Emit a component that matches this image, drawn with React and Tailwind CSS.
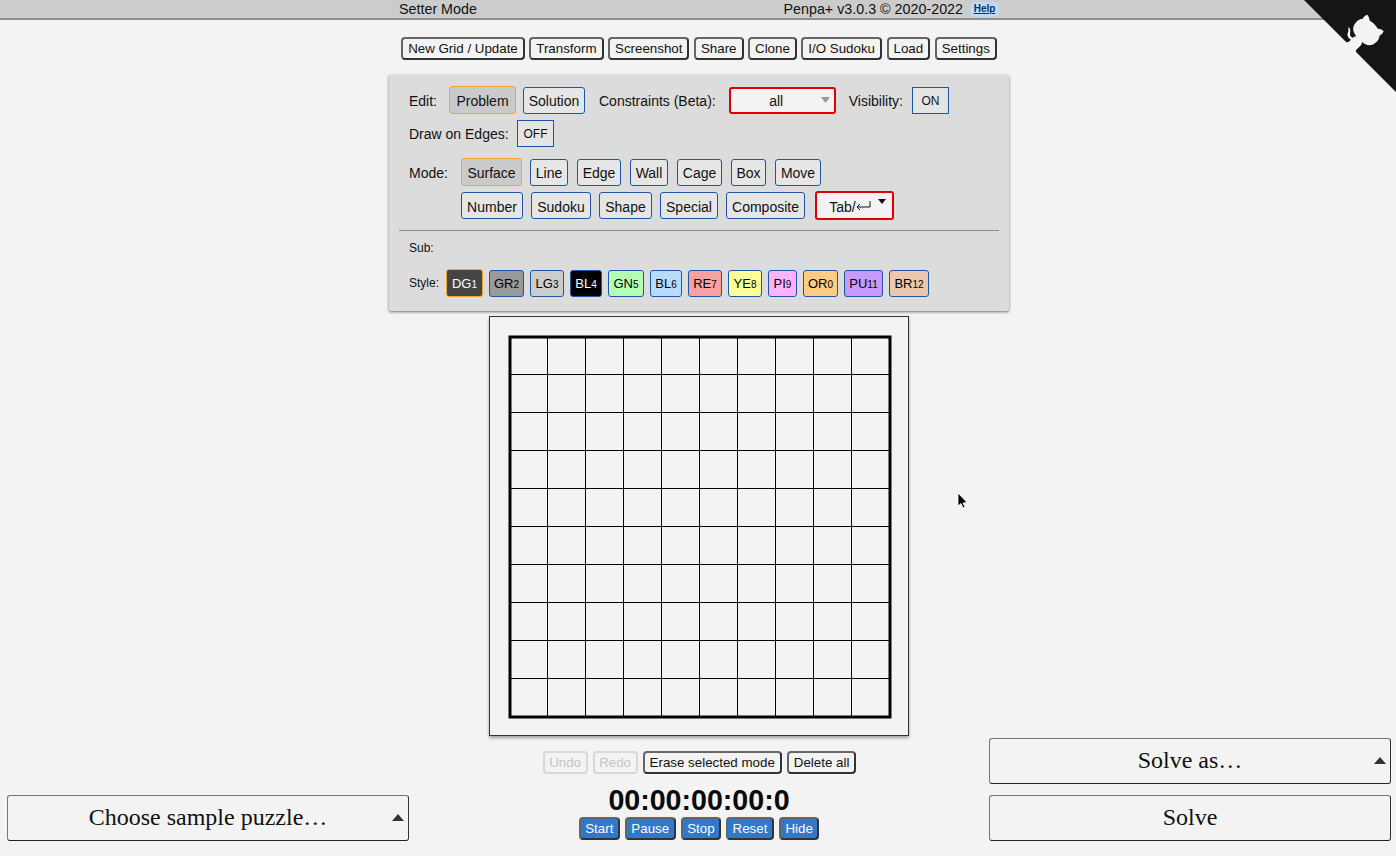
import React from "react";

const topButtons = ["New Grid / Update", "Transform", "Screenshot", "Share", "Clone", "I/O Sudoku", "Load", "Settings"];
const modesOne = [
  { label: "Line", cls: "w-[38px]" },
  { label: "Edge", cls: "w-[44px]" },
  { label: "Wall", cls: "w-[38px]" },
  { label: "Cage", cls: "w-[45px]" },
  { label: "Box", cls: "w-[35px]" },
  { label: "Move", cls: "w-[46px]" },
];
const modesTwo = [
  { label: "Number", cls: "w-[62px]" },
  { label: "Sudoku", cls: "w-[60px]" },
  { label: "Shape", cls: "w-[53px]" },
  { label: "Special", cls: "w-[58px]" },
  { label: "Composite", cls: "w-[79px]" },
];
const styles = [
  { name: "DG", num: "1", cls: "h-[28px] bg-[#444444] text-white border-[#f5a623] w-[37px]" },
  { name: "GR", num: "2", cls: "h-[27px] bg-[#999999] text-black border-[#1f55a8] w-[35px]" },
  { name: "LG", num: "3", cls: "h-[27px] bg-[#cccccc] text-black border-[#1f55a8] w-[34px]" },
  { name: "BL", num: "4", cls: "h-[27px] bg-black text-white border-[#1f55a8] w-[32px]" },
  { name: "GN", num: "5", cls: "h-[27px] bg-[#b3ffb3] text-black border-[#1f55a8] w-[36px]" },
  { name: "BL", num: "6", cls: "h-[27px] bg-[#b8dcff] text-black border-[#1f55a8] w-[32px]" },
  { name: "RE", num: "7", cls: "h-[27px] bg-[#f9a0a0] text-black border-[#1f55a8] w-[34px]" },
  { name: "YE", num: "8", cls: "h-[27px] bg-[#ffff99] text-black border-[#1f55a8] w-[34px]" },
  { name: "PI", num: "9", cls: "h-[27px] bg-[#ffb3ff] text-black border-[#1f55a8] w-[29px]" },
  { name: "OR", num: "0", cls: "h-[27px] bg-[#ffcc80] text-black border-[#1f55a8] w-[35px]" },
  { name: "PU", num: "11", cls: "h-[27px] bg-[#c899ff] text-black border-[#1f55a8] w-[39px]" },
  { name: "BR", num: "12", cls: "h-[27px] bg-[#ebc8ad] text-black border-[#1f55a8] w-[40px]" },
];
const timerButtons = ["Start", "Pause", "Stop", "Reset", "Hide"];

function ToolButton({ children }) {
  return (
    <button className="h-[23px] px-[5px] rounded-[4px] border-2 border-[#666] border-r-[#333] border-b-[#333] bg-[#f3f3f3] text-[13.333px] leading-none text-[#111]">
      {children}
    </button>
  );
}

function ModeButton({ children, active, className = "" }) {
  return (
    <button
      className={`pt-[2px] rounded-[3px] border text-[14px] leading-none text-[#111] ${
        active ? "h-[28px] bg-[#cacaca] border-[#f5a623]" : "h-[27px] bg-[#e6e6e6] border-[#1f55a8]"
      } ${className}`}
    >
      {children}
    </button>
  );
}

function BigSelect({ label }) {
  return (
    <div className="relative flex items-center justify-center h-[46px] pb-[2px] rounded-[3px] border border-[#777] border-b-[#222] border-r-[#333] bg-[#f3f3f3] font-['Liberation_Serif',serif] text-[24px] text-[#111]">
      {label}
      <svg className="absolute right-[4px] top-[18px]" width="12" height="7" viewBox="0 0 12 7">
        <polygon points="6,0 12,7 0,7" fill="#333" />
      </svg>
    </div>
  );
}

function Board() {
  const lines = [1, 2, 3, 4, 5, 6, 7, 8, 9];
  return (
    <div className="w-[420px] h-[420px] border border-[#333] shadow-[0_2px_3px_rgba(0,0,0,0.35)]">
      <svg width="418" height="418" viewBox="0 0 418 418" className="block">
        {lines.map((n) => (
          <g key={n} stroke="#000" strokeWidth="1">
            <line x1={20 + n * 38 - 0.5} y1="20" x2={20 + n * 38 - 0.5} y2="400" />
            <line x1="20" y1={20 + n * 38 - 0.5} x2="400" y2={20 + n * 38 - 0.5} />
          </g>
        ))}
        <rect x="20" y="20" width="380" height="380" fill="none" stroke="#000" strokeWidth="3" />
      </svg>
    </div>
  );
}

function GithubCorner() {
  return (
    <svg className="absolute top-0 right-0" width="92" height="92" viewBox="0 0 250 250">
      <path d="M0,0 L115,115 L130,115 L142,142 L250,250 L250,0 Z" fill="#151513" />
      <path
        d="M128.3,109.0 C113.8,99.7 119.0,89.6 119.0,89.6 C122.0,82.7 120.5,78.6 120.5,78.6 C119.2,72.0 123.4,76.3 123.4,76.3 C127.3,80.9 125.5,87.3 125.5,87.3 C122.9,97.6 130.6,101.9 134.4,103.2"
        fill="#f3f3f3"
      />
      <path
        d="M115.0,115.0 C114.9,115.1 118.7,116.5 119.8,115.4 L133.7,101.6 C136.9,99.2 139.9,98.4 142.2,98.6 C133.8,88.0 127.5,74.4 143.8,58.0 C148.5,53.4 154.0,51.2 159.7,51.0 C160.3,49.4 163.2,43.6 171.4,40.1 C171.4,40.1 176.1,42.5 178.8,56.2 C183.1,58.6 187.2,61.8 190.9,65.4 C194.5,69.0 197.7,73.2 200.1,77.6 C213.8,80.2 216.3,84.9 216.3,84.9 C212.7,93.1 206.9,96.0 205.4,96.6 C205.1,102.4 203.0,107.8 198.3,112.5 C181.9,128.9 168.3,122.5 157.7,114.1 C157.9,116.9 156.7,120.9 152.7,124.9 L141.0,136.5 C139.8,137.7 141.6,141.9 141.8,141.8 Z"
        fill="#f3f3f3"
      />
    </svg>
  );
}

export default function App() {
  return (
    <div className="relative flex flex-col h-[856px] overflow-hidden bg-[#f3f3f3] font-['Liberation_Sans',Arial,sans-serif] text-[#111]">
      {/* header */}
      <div className="flex items-center justify-between h-[20px] pl-[399px] pr-[397px] bg-[#cccccc] border-b-2 border-[#8f8f8f] text-[14.3px] leading-none">
        <span>Setter Mode</span>
        <div className="flex items-center gap-[7px]">
          <span>Penpa+ v3.0.3 © 2020-2022</span>
          <span className="flex items-center justify-center w-[29px] h-[15px] rounded-[6px] bg-[#bcdcff] text-[10px] font-bold underline text-[#14305c]">
            Help
          </span>
        </div>
      </div>

      {/* top buttons */}
      <div className="flex justify-center gap-[4.5px] mt-[17px] mb-[15px] pl-[2px]">
        {topButtons.map((b) => (
          <ToolButton key={b}>{b}</ToolButton>
        ))}
      </div>

      {/* control panel */}
      <div className="w-[620px] h-[236px] ml-[389px] px-[10px] pt-[11px] bg-[#dcdcdc] rounded-[2px] shadow-[0_1px_3px_rgba(0,0,0,0.55)] text-[14px]">
        <div className="flex items-center h-[28px] pl-[10px]">
          <span className="w-[40px] pt-[2px]">Edit:</span>
          <ModeButton active className="w-[67px]">Problem</ModeButton>
          <ModeButton className="w-[62px] ml-[7px]">Solution</ModeButton>
          <span className="ml-[14px] pt-[2px]">Constraints (Beta):</span>
          <div className="relative flex items-center justify-center w-[107px] h-[27px] ml-[13px] rounded-[3px] border-2 border-[#e00000] bg-[#f3f3f3] text-[14px]">
            <span className="pt-[3px] pr-[12px]">all</span>
            <svg className="absolute right-[4px] top-[8px]" width="9" height="7" viewBox="0 0 9 7">
              <polygon points="0,0 9,0 4.5,6" fill="#999" />
            </svg>
          </div>
          <span className="ml-[13px] pt-[2px]">Visibility:</span>
          <button className="w-[37px] h-[27px] ml-[9px] pt-[1px] border border-[#1f55a8] bg-[#e4e4e4] text-[12px] leading-none">ON</button>
        </div>
        <div className="flex items-center h-[28px] mt-[5px] pl-[10px]">
          <span className="w-[108px] pt-[2px]">Draw on Edges:</span>
          <button className="w-[37px] h-[27px] pt-[1px] border border-[#1f55a8] bg-[#e4e4e4] text-[12px] leading-none">OFF</button>
        </div>
        <div className="flex items-center h-[28px] mt-[11px] pl-[10px]">
          <span className="w-[52px] pt-[2px]">Mode:</span>
          <ModeButton active className="w-[61px]">Surface</ModeButton>
          <div className="flex gap-[9px] ml-[8px]">
            {modesOne.map((m) => (
              <ModeButton key={m.label} className={m.cls}>{m.label}</ModeButton>
            ))}
          </div>
        </div>
        <div className="flex items-center h-[29px] mt-[5px] pl-[62px]">
          <div className="flex gap-[8px]">
            {modesTwo.map((m) => (
              <ModeButton key={m.label} className={m.cls}>{m.label}</ModeButton>
            ))}
          </div>
          <div className="relative flex items-center justify-center w-[79px] h-[29px] ml-[10px] rounded-[3px] border-2 border-[#e00000] bg-[#f3f3f3] text-[14px]">
            <span className="flex items-center pt-[3px] pr-[9px]">
              Tab/
              <svg width="15" height="10" viewBox="0 0 15 10" className="-mt-[3px]">
                <path d="M14,0 L14,6 L1,6 M4,3 L1,6 L4,9" fill="none" stroke="#111" strokeWidth="1" />
              </svg>
            </span>
            <svg className="absolute right-[6px] top-[6px]" width="8" height="5" viewBox="0 0 8 5">
              <polygon points="0,0 8,0 4,5" fill="#111" />
            </svg>
          </div>
        </div>
        <div className="h-px mt-[10px] bg-[#8a8a8a]" />
        <div className="h-[14px] mt-[10px] pl-[10px] text-[12px] leading-[14px]">Sub:</div>
        <div className="flex items-center h-[28px] mt-[14px] pl-[10px]">
          <span className="w-[37px] text-[12px]">Style:</span>
          <div className="flex items-center gap-[6px]">
            {styles.map((s) => (
              <button key={s.name + s.num} className={`pt-[1px] rounded-[3px] border text-[13px] leading-none ${s.cls}`}>
                {s.name}
                <span className="text-[10px]">{s.num}</span>
              </button>
            ))}
          </div>
        </div>
      </div>

      {/* lower area */}
      <div className="flex flex-1 mt-[5px]">
        <div className="flex flex-col justify-end w-[489px] pl-[7px] pr-[80px] pb-[15px]">
          <BigSelect label="Choose sample puzzle…" />
        </div>
        <div className="flex flex-col items-center w-[420px]">
          <Board />
          <div className="flex gap-[5px] mt-[15px] h-[23px] pl-[1px]">
            <button className="w-[45px] rounded-[4px] border-2 border-[#d8d8d8] text-[13.333px] leading-none text-[#c4c4c4]">Undo</button>
            <button className="w-[45px] rounded-[4px] border-2 border-[#d8d8d8] text-[13.333px] leading-none text-[#c4c4c4]">Redo</button>
            <ToolButton>Erase selected mode</ToolButton>
            <ToolButton>Delete all</ToolButton>
          </div>
          <div className="mt-[10px] h-[32px] text-[28.6px] leading-[32px] font-bold text-[#0a0a0a]">00:00:00:00:0</div>
          <div className="flex gap-[5px] mt-[1px]">
            {timerButtons.map((b) => (
              <button
                key={b}
                className="h-[23px] px-[4.5px] rounded-[4px] border-2 border-[#666] border-r-[#333] border-b-[#333] bg-[#2f78cb] text-[13.333px] leading-none text-white"
              >
                {b}
              </button>
            ))}
          </div>
        </div>
        <div className="flex flex-col justify-end gap-[11px] flex-1 pl-[80px] pr-[5px] pb-[15px]">
          <BigSelect label="Solve as…" />
          <button className="h-[46px] pb-[2px] rounded-[3px] border border-[#777] border-b-[#222] border-r-[#333] bg-[#f3f3f3] font-['Liberation_Serif',serif] text-[24px] text-[#111]">
            Solve
          </button>
        </div>
      </div>

      <GithubCorner />

      {/* mouse pointer */}
      <svg className="absolute left-[956px] top-[492px]" width="14" height="20" viewBox="0 0 14 20">
        <path d="M2,1 L2,14 L5,11.5 L7,16 L9,15 L7,11 L11,10.5 Z" fill="#000" stroke="#fff" strokeWidth="0.8" />
      </svg>
    </div>
  );
}
